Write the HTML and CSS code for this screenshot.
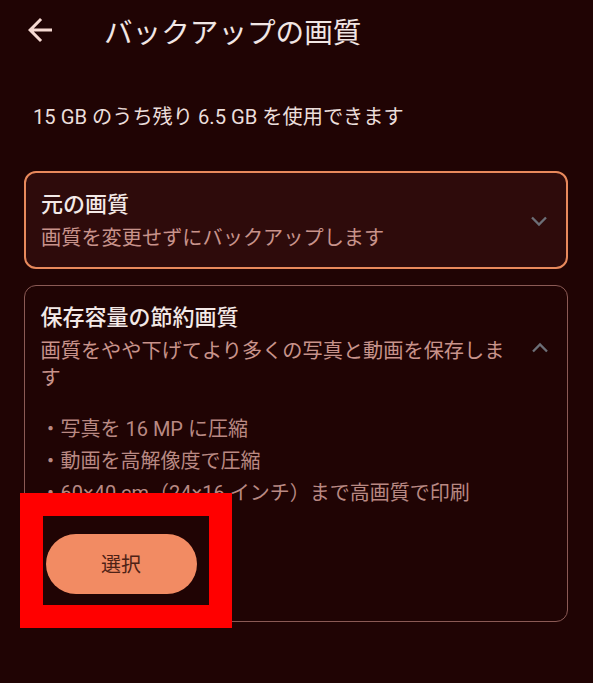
FILE: index.html
```html
<!DOCTYPE html>
<html lang="ja">
<head>
    <meta charset="UTF-8">
    <meta name="viewport" content="width=device-width, initial-scale=1.0">
    <title>バックアップの画質</title>
    <link rel="stylesheet" href="styles.css">
</head>
<body>
    <div class="page">
        <header class="top-bar">
            <svg class="back-icon" viewBox="0 0 24 24">
                <path d="M20 11H7.83l5.59-5.59L12 4l-8 8 8 8 1.41-1.41L7.83 13H20v-2z"/>
            </svg>
            <h1>バックアップの画質</h1>
        </header>

        <p class="quota">15 GB のうち残り 6.5 GB を使用できます</p>

        <div class="options">
            <div class="option option-selected">
                <div class="option-head">
                    <div class="option-text">
                        <div class="option-title">元の画質</div>
                        <div class="option-desc">画質を変更せずにバックアップします</div>
                    </div>
                    <svg class="chevron" viewBox="0 0 24 24">
                        <polyline points="6,9 12,15 18,9"/>
                    </svg>
                </div>
            </div>

            <div class="option">
                <div class="option-head">
                    <div class="option-text">
                        <div class="option-title">保存容量の節約画質</div>
                        <div class="option-desc">画質をやや下げてより多くの写真と動画を保存します</div>
                    </div>
                    <svg class="chevron" viewBox="0 0 24 24">
                        <polyline points="6,15 12,9 18,15"/>
                    </svg>
                </div>
                <ul class="details">
                    <li>・写真を 16 MP に圧縮</li>
                    <li>・動画を高解像度で圧縮</li>
                    <li>・60×40 cm（24×16 インチ）まで高画質で印刷</li>
                </ul>
                <div class="select-wrap">
                    <button class="select-btn">選択</button>
                    <div class="highlight"></div>
                </div>
            </div>
        </div>
    </div>
</body>
</html>
```

FILE: styles.css
```css
body {
    margin: 0;
    background-color: #200404;
    font-family: Roboto, "Noto Sans CJK JP", sans-serif;
}
.page {
    width: 593px;
    height: 683px;
    overflow: hidden;
}
.top-bar {
    display: flex;
    align-items: center;
    height: 60px;
    padding-left: 22px;
    gap: 46px;
}
.back-icon {
    width: 36px;
    height: 36px;
    fill: #f5d9d2;
}
h1 {
    margin: 0;
    font-size: 28.6px;
    font-weight: 400;
    color: #f1e6e4;
}
.quota {
    margin: 43px 0 0;
    padding-left: 33px;
    font-size: 20.2px;
    line-height: 28px;
    color: #ebdedb;
}
.options {
    margin: 40px 25px 0 24px;
}
.option {
    border: 1.5px solid #8b5a55;
    border-radius: 12px;
    padding: 17px 13.5px 27px 15.5px;
    margin-bottom: 16px;
}
.option-selected {
    border: 2px solid #e8895c;
    background-color: #2e0b0b;
    padding: 17px 13px 15px 15px;
}
.option-head {
    display: flex;
    align-items: center;
    gap: 12px;
}
.option-text {
    flex: 1;
}
.option-title {
    font-size: 22px;
    line-height: 30px;
    font-weight: 500;
    color: #f3e9e7;
}
.option-desc {
    margin-top: 5px;
    font-size: 20.2px;
    line-height: 27px;
    color: #c8938b;
}
.chevron {
    width: 28px;
    height: 28px;
    fill: none;
    stroke: #6c6f77;
    stroke-width: 2;
}
.details {
    list-style: none;
    margin: 21px 0 0;
    padding: 0;
    font-size: 20px;
    line-height: 32px;
    color: #b98983;
}
.select-wrap {
    position: relative;
    width: 151px;
    margin: 24.5px 0 0 5px;
}
.select-btn {
    display: block;
    width: 151px;
    height: 60px;
    border: none;
    border-radius: 30px;
    background-color: #f28b63;
    color: #4e2216;
    font-family: inherit;
    font-size: 20px;
}
.highlight {
    position: absolute;
    left: -26px;
    top: -41px;
    width: 212px;
    height: 135px;
    box-sizing: border-box;
    border: 23px solid #ff0000;
}
```
